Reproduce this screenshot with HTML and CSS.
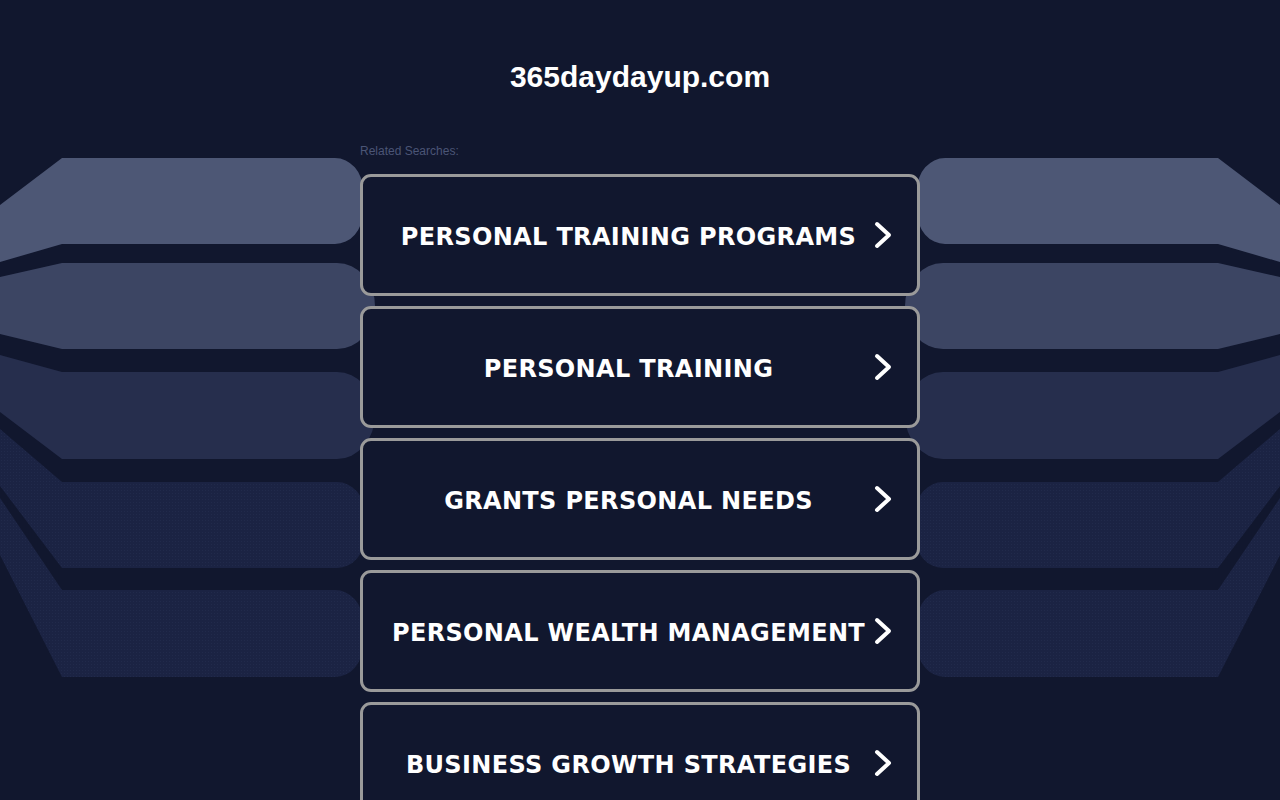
FILE: index.html
```html
<!DOCTYPE html>
<html lang="en">
<head>
<meta charset="utf-8">
<title>365daydayup.com</title>
<link rel="stylesheet" href="styles.css">
</head>
<body>
<svg class="bg" width="1280" height="800" viewBox="0 0 1280 800" aria-hidden="true">
  <defs>
    <pattern id="dots" width="3" height="3" patternUnits="userSpaceOnUse">
      <rect width="3" height="3" fill="#1b2343"/>
      <rect x="1" y="1" width="1" height="1" fill="#212a4b"/>
    </pattern>
    <g id="bands">
      <path fill="#4d5775" d="M0,205 L62,158 L335,158 A28,32 0 0 1 363,190 L363,212 A28,32 0 0 1 335,244 L62,244 L0,262 Z"/>
      <path fill="#3c4563" d="M0,277 L62,263 L337,263 A38,43 0 0 1 375,306 A38,43 0 0 1 337,349 L62,349 L0,334 Z"/>
      <path fill="#262e4d" d="M0,355 L62,372 L337,372 A38,43 0 0 1 375,415 A38,44 0 0 1 337,459 L62,459 L0,412 Z"/>
      <path fill="url(#dots)" d="M0,429 L62,482 L337,482 A28,32 0 0 1 365,514 L365,536 A28,32 0 0 1 337,568 L62,568 L0,486 Z"/>
      <path fill="url(#dots)" d="M0,498 L62,590 L335,590 A28,32 0 0 1 363,622 L363,645 A28,32 0 0 1 335,677 L62,677 L0,555 Z"/>
    </g>
  </defs>
  <use href="#bands"/>
  <use href="#bands" transform="translate(1280,0) scale(-1,1)"/>
</svg>
<main class="page">
  <h1 class="domain">365daydayup.com</h1>
  <div class="related">Related Searches:</div>
  <ul class="links">
    <li><a class="link" href="#"><span class="label">PERSONAL TRAINING PROGRAMS</span><svg class="chev" width="28" height="30" viewBox="0 0 28 30"><path d="M3,4 L15,15 L3,26" fill="none" stroke="#fff" stroke-width="4" stroke-linecap="round" stroke-linejoin="round"/></svg></a></li>
    <li><a class="link" href="#"><span class="label">PERSONAL TRAINING</span><svg class="chev" width="28" height="30" viewBox="0 0 28 30"><path d="M3,4 L15,15 L3,26" fill="none" stroke="#fff" stroke-width="4" stroke-linecap="round" stroke-linejoin="round"/></svg></a></li>
    <li><a class="link" href="#"><span class="label">GRANTS PERSONAL NEEDS</span><svg class="chev" width="28" height="30" viewBox="0 0 28 30"><path d="M3,4 L15,15 L3,26" fill="none" stroke="#fff" stroke-width="4" stroke-linecap="round" stroke-linejoin="round"/></svg></a></li>
    <li><a class="link" href="#"><span class="label">PERSONAL WEALTH MANAGEMENT</span><svg class="chev" width="28" height="30" viewBox="0 0 28 30"><path d="M3,4 L15,15 L3,26" fill="none" stroke="#fff" stroke-width="4" stroke-linecap="round" stroke-linejoin="round"/></svg></a></li>
    <li><a class="link" href="#"><span class="label">BUSINESS GROWTH STRATEGIES</span><svg class="chev" width="28" height="30" viewBox="0 0 28 30"><path d="M3,4 L15,15 L3,26" fill="none" stroke="#fff" stroke-width="4" stroke-linecap="round" stroke-linejoin="round"/></svg></a></li>
  </ul>
</main>
</body>
</html>
```
FILE: styles.css
```css
html, body {
  margin: 0;
  padding: 0;
  background: #11172e;
  height: 100%;
  overflow: hidden;
}
body {
  position: relative;
  font-family: "Liberation Sans", Arial, sans-serif;
}
.bg {
  position: absolute;
  left: 0;
  top: 0;
  z-index: 0;
  display: block;
}
.page {
  position: relative;
  z-index: 1;
  width: 560px;
  margin: 0 auto;
  padding-top: 59px;
}
.domain {
  margin: 0;
  font-family: "Liberation Sans", Arial, sans-serif;
  font-weight: bold;
  font-size: 30px;
  line-height: 36px;
  color: #ffffff;
  text-align: center;
}
.related {
  margin-top: 49px;
  font-size: 12px;
  line-height: 14px;
  color: #4b5576;
}
.links {
  list-style: none;
  margin: 16px 0 0;
  padding: 0;
  display: flex;
  flex-direction: column;
  gap: 10px;
}
.link {
  box-sizing: border-box;
  height: 122px;
  display: flex;
  align-items: center;
  padding: 0 15px 0 20px;
  border: 3px solid #9a9a9a;
  border-radius: 11px;
  background: #11172e;
  text-decoration: none;
  color: #ffffff;
}
.label {
  flex: 1;
  text-align: center;
  font-family: "DejaVu Sans", Verdana, sans-serif;
  font-weight: bold;
  font-size: 24px;
  line-height: 30px;
  letter-spacing: 0.35px;
  padding-top: 4px;
  white-space: nowrap;
}
.chev {
  flex: 0 0 28px;
  display: block;
}
```
